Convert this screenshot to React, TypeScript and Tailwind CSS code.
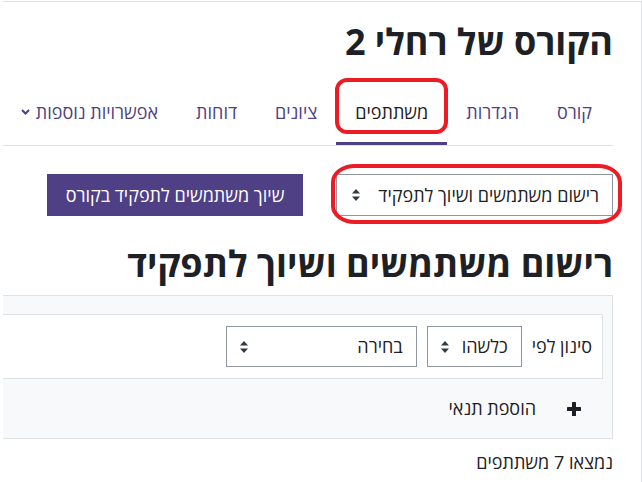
const TABS = [
  { label: "קורס" },
  { label: "הגדרות" },
  { label: "משתתפים", active: true },
  { label: "ציונים" },
  { label: "דוחות" },
];

function SortIcon() {
  return (
    <svg width="8" height="12" viewBox="0 0 8 12" className="shrink-0 text-[#343a40]" fill="currentColor">
      <path d="M4 0L8 4.6H0Z" />
      <path d="M0 7.4H8L4 12Z" />
    </svg>
  );
}

function PlusIcon() {
  return (
    <svg width="14" height="14" viewBox="0 0 14 14" className="shrink-0 text-[#1d2125]" fill="currentColor">
      <rect x="5" y="0" width="4" height="14" rx="0.6" />
      <rect x="0" y="5" width="14" height="4" rx="0.6" />
    </svg>
  );
}

function ChevronDown() {
  return (
    <svg width="9" height="6" viewBox="0 0 9 6" className="shrink-0" fill="none" stroke="currentColor" strokeWidth="2">
      <path d="M1 1l3.5 3.5L8 1" />
    </svg>
  );
}

export default function App() {
  return (
    <div
      dir="rtl"
      className="h-[482px] w-[642px] overflow-hidden bg-white font-['Open_Sans','Liberation_Sans',sans-serif] text-[18px] text-[#1d2125]"
    >
      <div className="mt-px h-[481px] w-[639px] overflow-hidden border-t border-r border-[#dee2e6]">
        <div className="-ml-[40px] pr-[28px]">
          <h1 className="pt-[18px] text-[36px] font-bold leading-[44px]">הקורס של רחלי 2</h1>

          <nav className="mt-[25px] border-b border-[#dee2e6]">
            <ul className="mr-[2px] flex items-end">
              {TABS.map((tab) => (
                <li key={tab.label} className="relative">
                  <a
                    href="#"
                    className={
                      tab.active
                        ? "block border-b-[3px] border-[#4f3f85] px-[19px] pt-[10px] pb-[17px] leading-[26px] text-[#1d2125]"
                        : "block border-b-[3px] border-transparent px-[19px] pt-[10px] pb-[17px] leading-[26px] text-[#4f3f85]"
                    }
                  >
                    {tab.label}
                  </a>
                  {tab.active && (
                    <span className="pointer-events-none absolute -top-[11px] -right-px -left-px h-[56px] rounded-[12px] border-[4px] border-[#ed1c24]" />
                  )}
                </li>
              ))}
              <li>
                <a href="#" className="flex items-center gap-[6px] border-b-[3px] border-transparent px-[19px] pt-[10px] pb-[17px] leading-[26px] text-[#4f3f85]">
                  אפשרויות נוספות
                  <ChevronDown />
                </a>
              </li>
            </ul>
          </nav>

          <div className="mt-[28px] flex items-center gap-[33px]">
            <div className="relative">
              <div className="flex h-[42px] w-[277px] items-center justify-between border border-[#8f959e] pr-[13px] pl-[15px]">
                <span>רישום משתמשים ושיוך לתפקיד</span>
                <SortIcon />
              </div>
              <span className="pointer-events-none absolute -top-[10px] -right-[9px] -bottom-[8px] -left-[5px] rounded-[24px_/_18px] border-[4px] border-[#ed1c24]" />
            </div>
            <button type="button" className="flex h-[42px] w-[256px] items-center justify-center bg-[#4f3f85] text-white">
              שיוך משתמשים לתפקיד בקורס
            </button>
          </div>

          <h2 className="mt-[26px] text-[36px] font-bold leading-[44px]">רישום משתמשים ושיוך לתפקיד</h2>

          <section className="mt-[9px] border border-[#dee2e6] bg-[#f8f9fa] pt-[18px] pr-[9px]">
            <div className="flex h-[65px] items-center gap-[10px] border border-[#dee2e6] bg-white pr-[10px]">
              <span>סינון לפי</span>
              <div className="flex h-[41px] w-[95px] items-center justify-between border border-[#8f959e] px-[13px]">
                <span>כלשהו</span>
                <SortIcon />
              </div>
              <div className="flex h-[41px] w-[191px] items-center justify-between border border-[#8f959e] px-[13px]">
                <span>בחירה</span>
                <SortIcon />
              </div>
            </div>
            <div className="flex h-[59px] items-center gap-[31px] pr-[22px]">
              <PlusIcon />
              <span>הוספת תנאי</span>
            </div>
          </section>

          <p className="mt-[11px] leading-[24px]">נמצאו 7 משתתפים</p>
        </div>
      </div>
    </div>
  );
}
